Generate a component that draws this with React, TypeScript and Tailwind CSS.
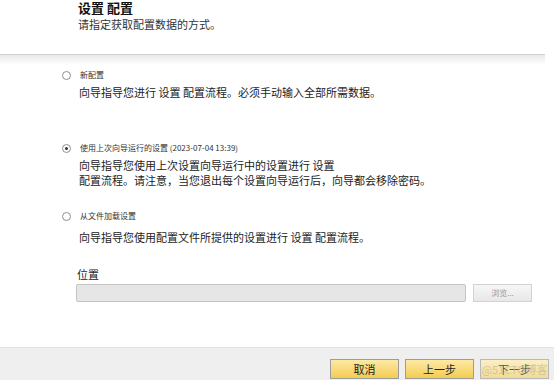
import React from "react";

const font = { fontFamily: '"Noto Sans CJK SC", "Noto Sans", sans-serif' };

function Radio({ checked }: { checked?: boolean }) {
  return (
    <span className="w-[9px] h-[9px] rounded-full border border-[#8e8e8e] bg-white flex items-center justify-center shrink-0">
      {checked && <span className="w-[3px] h-[3px] rounded-full bg-[#333]" />}
    </span>
  );
}

function Btn({ label, dim }: { label: string; dim?: boolean }) {
  return (
    <div
      className={
        "relative w-[69px] h-[20px] border flex items-center justify-center text-[11px] leading-none " +
        (dim
          ? "border-[#b8b8b8] bg-gradient-to-b from-[#fbefc4] to-[#f1dc93] text-[#555]"
          : "border-[#9c9c9c] bg-gradient-to-b from-[#fde9a3] to-[#f3cc4c] text-[#222]")
      }
    >
      {label}
      {dim && (
        <span className="absolute inset-0 flex items-center justify-center text-[11px] text-[#c9bc9a]/80 whitespace-nowrap">
          @51CTO博客
        </span>
      )}
    </div>
  );
}

export default function App() {
  return (
    <div className="w-[554px] h-[380px] bg-white flex flex-col overflow-hidden text-[#222]" style={font}>
      <div className="h-[54px] pl-[78px] pt-[1px] shrink-0">
        <div className="text-[13px] leading-[14px] font-bold text-[#111]">设置 配置</div>
        <div className="mt-[2px] text-[11px] leading-[14px] text-[#333]">请指定获取配置数据的方式。</div>
      </div>
      <div className="h-px bg-[#d0d0d0] mr-[9px] shrink-0" />
      <div className="h-[10px] bg-gradient-to-b from-[#e9e9e9] to-white mr-[9px] shrink-0" />

      <div className="pl-[62px] flex flex-col">
        <div className="mt-[4px] h-[12px] flex items-center gap-[9px]">
          <Radio />
          <span className="text-[8px] leading-[12px] text-[#333]">新配置</span>
        </div>
        <div className="mt-[4px] ml-[17px] text-[11px] leading-[14px] text-[#222]">
          向导指导您进行 设置 配置流程。必须手动输入全部所需数据。
        </div>

        <div className="mt-[43px] h-[12px] flex items-center gap-[9px]">
          <Radio checked />
          <span className="text-[8px] leading-[12px] text-[#333]">使用上次向导运行的设置 (2023-07-04 13:39)</span>
        </div>
        <div className="mt-[4px] ml-[17px] text-[11px] leading-[14px] text-[#222] flex flex-col gap-px">
          <div>向导指导您使用上次设置向导运行中的设置进行 设置</div>
          <div>配置流程。请注意，当您退出每个设置向导运行后，向导都会移除密码。</div>
        </div>

        <div className="mt-[23px] h-[12px] flex items-center gap-[9px]">
          <Radio />
          <span className="text-[8px] leading-[12px] text-[#333]">从文件加载设置</span>
        </div>
        <div className="mt-[8px] ml-[17px] text-[11px] leading-[14px] text-[#222]">
          向导指导您使用配置文件所提供的设置进行 设置 配置流程。
        </div>
      </div>

      <div className="pl-[77px] mt-[23px] text-[11px] leading-[14px] text-[#222]">位置</div>
      <div className="mt-[3px] pl-[76px] flex items-center gap-[7px]">
        <div className="w-[390px] h-[18px] rounded-[2px] border border-[#c4c4c4] bg-[#e6e6e6]" />
        <div className="w-[59px] h-[18px] border border-[#d2d2d2] bg-gradient-to-b from-[#f6f6f6] to-[#e8e8e8] flex items-center justify-center text-[8px] text-[#9a9a9a]">
          浏览...
        </div>
      </div>

      <div className="flex-1" />
      <div className="h-[33px] shrink-0 bg-[#efefef] border-t border-[#e2e2e2] flex justify-end items-start pt-[11px] pr-[5px] gap-[6px]">
        <Btn label="取消" />
        <Btn label="上一步" />
        <Btn label="下一步" dim />
      </div>
    </div>
  );
}
